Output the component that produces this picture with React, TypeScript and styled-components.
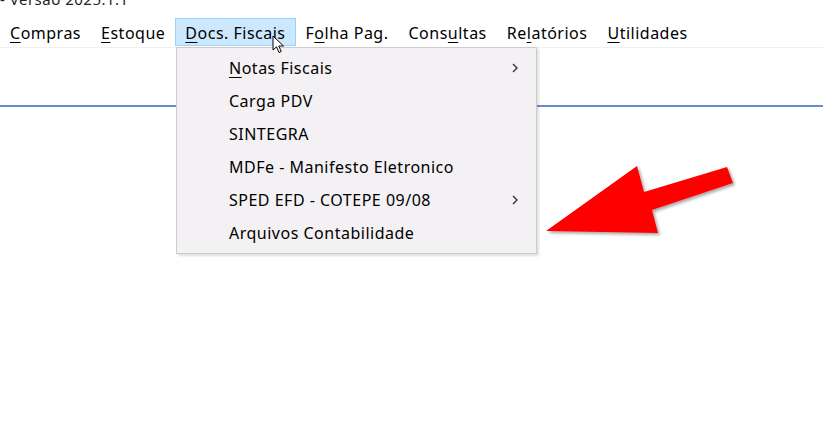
import React from 'react'
import styled, { createGlobalStyle } from 'styled-components'

const GlobalStyle = createGlobalStyle`
  html, body {
    margin: 0;
    padding: 0;
    background: #ffffff;
  }
  body {
    font-family: 'Noto Sans', 'Open Sans', sans-serif;
    color: #000;
  }
`

interface IMenuItem {
  label: string;
  hotkey: number;
  active?: boolean;
}

const menuItems: IMenuItem[] = [
  { label: 'Compras', hotkey: 0 },
  { label: 'Estoque', hotkey: 0 },
  { label: 'Docs. Fiscais', hotkey: 0, active: true },
  { label: 'Folha Pag.', hotkey: 1 },
  { label: 'Consultas', hotkey: 4 },
  { label: 'Relatórios', hotkey: 2 },
  { label: 'Utilidades', hotkey: 0 },
]

interface IDropItem {
  label: string;
  hotkey?: number;
  submenu?: boolean;
}

const dropItems: IDropItem[] = [
  { label: 'Notas Fiscais', hotkey: 0, submenu: true },
  { label: 'Carga PDV' },
  { label: 'SINTEGRA' },
  { label: 'MDFe - Manifesto Eletronico' },
  { label: 'SPED EFD - COTEPE 09/08', submenu: true },
  { label: 'Arquivos Contabilidade' },
]

const Hotkey: React.FC<{ text: string; index?: number }> = ({ text, index }) => {
  if (index === undefined) return <>{text}</>
  return (
    <>
      {text.slice(0, index)}
      <u>{text.charAt(index)}</u>
      {text.slice(index + 1)}
    </>
  )
}

const App: React.FC = () => {
  return (
    <StyledPage>
      <GlobalStyle />
      <StyledTitleRow>
        <span>- Versão 2025.1.1</span>
      </StyledTitleRow>

      <StyledMenuBar>
        {menuItems.map((item) => (
          <StyledMenuItem key={item.label} $active={item.active}>
            <Hotkey text={item.label} index={item.hotkey} />
          </StyledMenuItem>
        ))}
      </StyledMenuBar>

      <StyledWorkArea>
        <StyledRule />
      </StyledWorkArea>

      <StyledDropdown>
        {dropItems.map((item) => (
          <StyledDropRow key={item.label}>
            <span>
              <Hotkey text={item.label} index={item.hotkey} />
            </span>
            {item.submenu && (
              <svg width="8" height="12" viewBox="0 0 8 12">
                <path d="M2 2 L6 6 L2 10" fill="none" stroke="#333" strokeWidth="1.4" />
              </svg>
            )}
          </StyledDropRow>
        ))}
      </StyledDropdown>

      {/* mouse pointer over the open menu */}
      <StyledCursor width="14" height="20" viewBox="0 0 14 20">
        <path
          d="M1 1 L1 15 L4.5 11.8 L7 17.5 L9.2 16.5 L6.8 11 L11.5 11 Z"
          fill="#fff"
          stroke="#000"
          strokeWidth="1"
          strokeLinejoin="round"
        />
      </StyledCursor>

      {/* red pointing arrow */}
      <StyledArrow width="823" height="427" viewBox="0 0 823 427">
        <defs>
          <filter id="arrowShadow" x="-10%" y="-10%" width="130%" height="130%">
            <feDropShadow dx="2" dy="2" stdDeviation="1.5" floodColor="#000" floodOpacity="0.35" />
          </filter>
        </defs>
        <polygon
          points="546,231 637,166 644,192 727,167 733,183 652,210 658,233"
          fill="#ff0000"
          filter="url(#arrowShadow)"
        />
      </StyledArrow>
    </StyledPage>
  )
}

export default App

const StyledPage = styled.div`
  position: relative;
  width: 823px;
  height: 427px;
  overflow: hidden;
  background: #ffffff;
`

const StyledTitleRow = styled.div`
  height: 12px;
  overflow: hidden;
  font-size: 15px;
  letter-spacing: 0.5px;
  color: #222;
  span {
    display: block;
    margin-top: -11px;
    line-height: 20px;
  }
`

const StyledMenuBar = styled.div`
  display: flex;
  align-items: stretch;
  height: 36px;
  padding-top: 6px;
  box-sizing: border-box;
  border-bottom: 1px solid #f0f0f0;
`

const StyledMenuItem = styled.div<{ $active?: boolean }>`
  display: flex;
  align-items: center;
  padding: 1px 9px 0;
  height: 28px;
  box-sizing: border-box;
  font-size: 16px;
  letter-spacing: 0.5px;
  color: #000;
  white-space: nowrap;
  border: 1px solid ${({ $active }) => ($active ? '#99d1ff' : 'transparent')};
  background: ${({ $active }) => ($active ? '#cce8ff' : 'transparent')};
  u {
    text-underline-offset: 3px;
  }
`

const StyledWorkArea = styled.div`
  padding-top: 57px;
`

const StyledRule = styled.div`
  height: 2px;
  background: #6d8ccc;
`

const StyledDropdown = styled.div`
  position: absolute;
  left: 176px;
  top: 47px;
  width: 361px;
  box-sizing: border-box;
  padding: 3px 0 4px;
  background: #f4f1f4;
  border: 1px solid #cccccc;
  box-shadow: 2px 2px 2px rgba(0, 0, 0, 0.12);
`

const StyledDropRow = styled.div`
  display: flex;
  align-items: center;
  justify-content: space-between;
  height: 33px;
  padding: 0 17px 0 52px;
  font-size: 16px;
  letter-spacing: 0.5px;
  color: #000;
  white-space: nowrap;
  u {
    text-underline-offset: 3px;
  }
`

const StyledCursor = styled.svg`
  position: absolute;
  left: 272px;
  top: 35px;
`

const StyledArrow = styled.svg`
  position: absolute;
  left: 0;
  top: 0;
  pointer-events: none;
`
